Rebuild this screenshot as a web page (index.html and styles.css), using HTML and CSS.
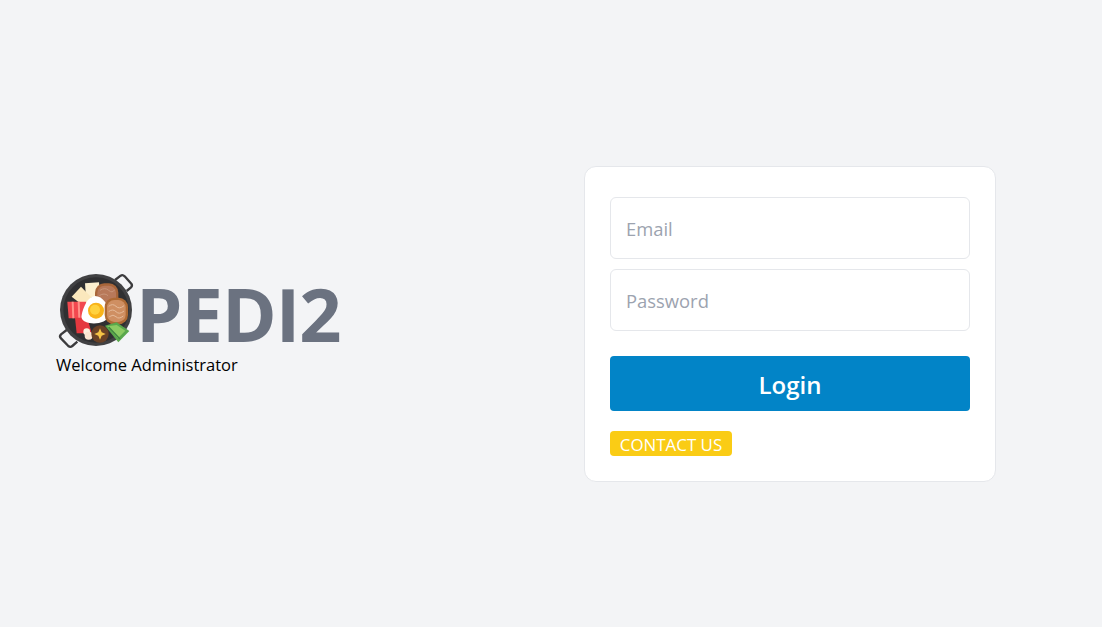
FILE: index.html
```html
<!DOCTYPE html>
<html lang="en">
<head>
  <title>PEDI2 Login</title>
  <meta charset="utf-8">
  <meta name="viewport" content="width=device-width, initial-scale=1">
  <link rel="stylesheet" href="styles.css">
</head>
<body>
  <main class="page">
    <section class="brand">
      <div class="brand-logo">
        <svg class="pan" viewBox="18 21 240 240" width="80" height="80" aria-hidden="true">
          <g fill="none" stroke="#3b3b3d" stroke-width="7" stroke-linejoin="round">
            <path d="M195 45 L212 32 Q218 28 224 34 L244 56 Q248 62 243 67 L230 78"/>
            <path d="M50 195 L33 208 Q27 214 33 220 L55 243 Q61 248 67 243 L82 230"/>
          </g>
          <circle cx="138" cy="135" r="108" fill="#414143"/>
          <circle cx="138" cy="135" r="98" fill="#303032"/>
          <path d="M105 55 L147 52 L150 95 L108 98 Z" fill="#fdf0cf"/>
          <path d="M65 95 L93 65 L127 100 L100 122 Z" fill="#fbe8bd"/>
          <rect x="135" y="55" width="70" height="72" rx="28" fill="#a9663a"/>
          <rect x="142" y="62" width="56" height="58" rx="22" fill="#b8795a"/>
          <path d="M150 76 Q165 66 176 76 T194 74 M148 92 Q163 82 174 92" fill="none" stroke="#c9967a" stroke-width="3"/>
          <path d="M52 110 H108 V160 H56 Z" fill="#f2484f"/>
          <path d="M68 110 L70 160 M86 110 L88 160" stroke="#ff9088" stroke-width="6"/>
          <path d="M75 158 H112 L125 205 H80 Z" fill="#e5383f"/>
          <path d="M135 93 C158 93 178 120 176 150 C174 172 140 178 118 174 C100 170 92 162 95 150 C100 128 112 95 135 93 Z" fill="#fff"/>
          <circle cx="138" cy="137" r="24" fill="#f9b41a"/>
          <circle cx="135" cy="134" r="15" fill="#ffd23f"/>
          <rect x="164" y="98" width="70" height="80" rx="28" fill="#ae6a34"/>
          <rect x="171" y="105" width="56" height="66" rx="22" fill="#cf8f62"/>
          <path d="M176 124 Q188 114 198 124 T222 122 M176 140 Q188 130 198 140 T222 138 M178 155 Q190 146 198 155 T220 153" fill="none" stroke="#e6bb9a" stroke-width="3"/>
          <path d="M165 182 L200 172 L238 198 L205 232 Z" fill="#5aa84c"/>
          <path d="M172 184 L200 180 L226 197 L204 220 Z" fill="#8ccb62"/>
          <path d="M176 186 L210 222" stroke="#3f8540" stroke-width="4"/>
          <circle cx="110" cy="200" r="10" fill="#fdf0dd"/>
          <circle cx="116" cy="212" r="12" fill="#fbe6d0"/>
          <circle cx="150" cy="207" r="26" fill="#6b4226"/>
          <path d="M150 190 L155 202 L167 207 L155 212 L150 224 L145 212 L133 207 L145 202 Z" fill="#f6c445"/>
        </svg>
        <span class="brand-name">PEDI2</span>
      </div>
      <p class="welcome">Welcome Administrator</p>
    </section>

    <form class="card">
      <input class="field" type="text" placeholder="Email">
      <input class="field" type="password" placeholder="Password">
      <button class="login" type="button">Login</button>
      <a class="contact" href="#">CONTACT US</a>
    </form>
  </main>
</body>
</html>
```

FILE: styles.css
```css
*, *::before, *::after {
  margin: 0;
  padding: 0;
  box-sizing: border-box;
}

body {
  min-height: 100vh;
  background-color: #f3f4f6;
  font-family: "Open Sans", "Noto Sans", sans-serif;
}

.page {
  min-height: 100vh;
  padding: 21px 106px 0 56px;
  display: flex;
  align-items: center;
  justify-content: space-between;
}

.brand-logo {
  display: flex;
  align-items: center;
  height: 80px;
}

.pan {
  flex: none;
}

.brand-name {
  padding-top: 4px;
  color: #6b7280;
  font-size: 74px;
  font-weight: 700;
  letter-spacing: -1px;
  line-height: 72px;
}

.welcome {
  height: 24px;
  color: #000;
  font-size: 16.5px;
  line-height: 26px;
}

.card {
  width: 412px;
  padding: 30px 25px 25px;
  display: flex;
  flex-direction: column;
  align-items: flex-start;
  background-color: #fff;
  border: 1px solid #e5e7eb;
  border-radius: 12px;
}

.field {
  width: 100%;
  height: 62px;
  margin-bottom: 10px;
  padding: 0 15px;
  border: 1px solid #e5e7eb;
  border-radius: 6px;
  font: inherit;
  font-size: 18.4px;
  color: #111827;
  background-color: #fff;
}

.field::placeholder {
  color: #9ca3af;
  opacity: 1;
}

.login {
  width: 100%;
  height: 55px;
  margin-top: 15px;
  padding-top: 1px;
  border: 0;
  border-radius: 4px;
  color: #fff;
  background-color: #0284c7;
  font: inherit;
  font-size: 24px;
  font-weight: 600;
}

.contact {
  margin-top: 20px;
  width: 122px;
  height: 25px;
  display: block;
  border-radius: 4px;
  color: #fff;
  background-color: #facc15;
  font-size: 16.9px;
  line-height: 27px;
  text-align: center;
  text-decoration: none;
}
```
